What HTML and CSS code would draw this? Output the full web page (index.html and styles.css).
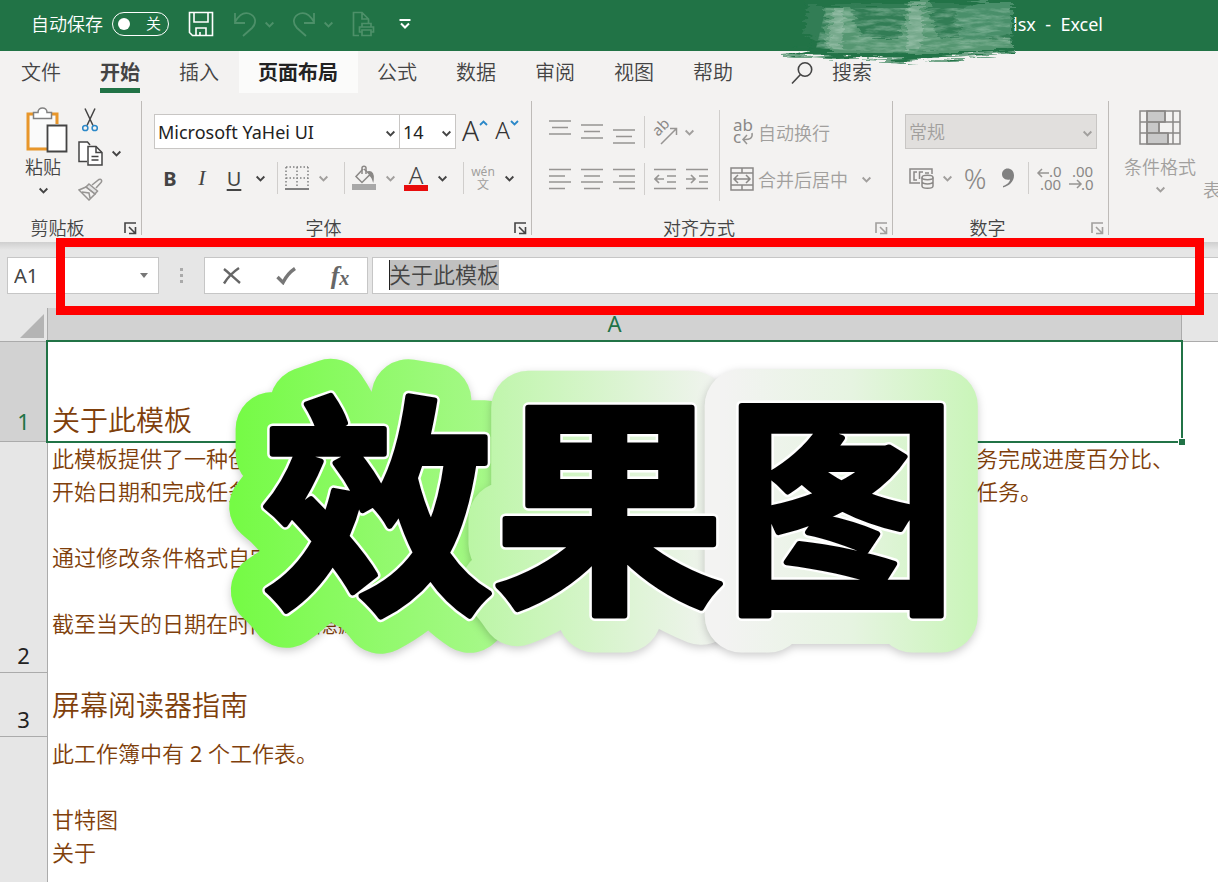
FILE: index.html
```html
<!DOCTYPE html>
<html lang="zh-CN">
<head>
    <meta charset="UTF-8">
    <meta name="viewport" content="width=device-width, initial-scale=1.0">
    <title>Excel</title>
    <link rel="stylesheet" href="styles.css">
</head>
<body>
<!-- Shared icons -->
<svg class="sprite" aria-hidden="true">
    <symbol id="chevron" viewBox="0 0 10 10"><path d="M1.5 3.2L5 6.7L8.5 3.2" fill="none" stroke="currentColor" stroke-width="1.7"/></symbol>
    <symbol id="launcher" viewBox="0 0 13 13"><path d="M1 11V1H12M5 5L11 11M11.5 5V11.5H5" fill="none" stroke="currentColor" stroke-width="1.6"/></symbol>
</svg>

<header class="title-bar">
    <label class="autosave" for="autosave">自动保存</label>
    <span class="switch">
        <input type="checkbox" id="autosave">
        <span class="switch-text">关</span>
    </span>
    <button class="quick save" aria-label="保存">
        <svg width="26" height="26" viewBox="0 0 26 26" fill="none" stroke="#fff" stroke-width="1.6"><path d="M1.5 1.5H24.500V24.500H4.500L1.500 21.500ZM6 1.500V11H20V1.500M8 24.500V17H18V24.500M12 21V24.500"/></svg>
    </button>
    <button class="quick dim" aria-label="撤消">
        <svg width="24" height="26" viewBox="0 0 24 26" fill="none" stroke="currentColor" stroke-width="1.8"><path d="M2 2V12H12M2 11C6 4 11 1 16 2.500C23 5 24 12 19 17L10 25"/></svg>
    </button>
    <button class="quick-more dim" aria-label="撤消列表"><svg width="11" height="11"><use href="#chevron"/></svg></button>
    <button class="quick dim" aria-label="恢复">
        <svg width="24" height="26" viewBox="0 0 24 26" fill="none" stroke="currentColor" stroke-width="1.8"><path d="M22 2V12H12M22 11C18 4 13 1 8 2.500C1 5 0 12 5 17L14 25"/></svg>
    </button>
    <button class="quick-more dim" aria-label="恢复列表"><svg width="11" height="11"><use href="#chevron"/></svg></button>
    <button class="quick print dim" aria-label="打印预览">
        <svg width="23" height="26" viewBox="0 0 23 26" fill="none" stroke="currentColor" stroke-width="1.7"><path d="M7 24.500H1.500V1.500H10L16.500 8V12M10 1.500V8H16.500M10 16V12.500H19V16M10 21H7.500V16H21.500V21H19M10 19H19V24.500H10Z"/></svg>
    </button>
    <button class="quick" aria-label="自定义快速访问工具栏">
        <svg width="12" height="12" viewBox="0 0 12 12" fill="none" stroke="#fff" stroke-width="2"><path d="M0.500 2H11.500M2 5.500L6 9.500L10 5.500"/></svg>
    </button>
    <span class="doc-title">lsx&nbsp; -&nbsp; Excel</span>
    <svg class="smudge" width="250" height="66" viewBox="0 0 250 66" aria-hidden="true">
        <defs>
            <filter id="rough" x="-5%" y="-10%" width="110%" height="120%">
                <feTurbulence type="fractalNoise" baseFrequency="0.03 0.35" numOctaves="3" seed="4" result="n"/>
                <feDisplacementMap in="SourceGraphic" in2="n" scale="14" xChannelSelector="R" yChannelSelector="G"/>
            </filter>
            <filter id="grain" x="0" y="0" width="100%" height="100%">
                <feTurbulence type="fractalNoise" baseFrequency="0.05 0.25" numOctaves="4" seed="9"/>
                <feColorMatrix values="0 0 0 0 .62  0 0 0 0 .78  0 0 0 0 .68  2.400 0 0 0 -.9"/>
                <feComposite in2="SourceGraphic" operator="in"/>
            </filter>
        </defs>
        <g filter="url(#rough)">
            <path d="M28 0H238V52L190 56L150 58L124 62L100 57L60 58L12 54L36 48Z" fill="#217346"/>
            <path d="M32 4H236V42L150 50L60 52L28 34Z" fill="#317d54"/>
            <path d="M48 6H76L86 38L124 38L132 2H152L162 38L236 40V48L140 54L52 52Z" fill="#559671"/>
            <path d="M178 10L204 2H236V34L184 42Z" fill="#4a8f6a"/>
            <path d="M56 6H68L66 48H54ZM134 4H148L146 50H130Z" fill="#76a98c"/>
            <path d="M6 54L60 58M90 59L130 61L238 52" fill="none" stroke="#6fa487" stroke-width="2"/>
        </g>
        <path d="M50 8H234V46L120 54L40 48Z" fill="#fff" filter="url(#grain)" opacity="0.35"/>
    </svg>
</header>

<nav class="tabs">
    <a href="#">文件</a>
    <a href="#" class="active">开始</a>
    <a href="#">插入</a>
    <a href="#" class="hovered">页面布局</a>
    <a href="#">公式</a>
    <a href="#">数据</a>
    <a href="#">审阅</a>
    <a href="#">视图</a>
    <a href="#">帮助</a>
    <button class="search">
        <svg width="22" height="24" viewBox="0 0 22 24" fill="none" stroke="#444" stroke-width="1.6"><circle cx="14" cy="8.500" r="6.700"/><path d="M9.500 13.500L1 22.500"/></svg>
        搜索
    </button>
</nav>

<section class="ribbon">
    <div class="group clipboard">
        <div class="group-body">
            <button class="big-button paste">
                <svg class="paste-icon" width="42" height="46" viewBox="0 0 42 46" fill="none" stroke-width="2">
                    <path d="M9 7H2V42H21" stroke="#e8962a" stroke-width="3"/>
                    <path d="M24 7H31V17" stroke="#e8962a" stroke-width="3"/>
                    <path d="M4 9H29V17H20V40H4Z" fill="#fafafa"/>
                    <path d="M7.500 11.500V5.500H12C12 -0.500 21 -0.500 21 5.500H25.500V11.500Z" fill="#fff" stroke="#808080" stroke-width="1.500"/>
                    <path d="M21.500 18.500H40.500V44.500H21.500Z" fill="#fff" stroke="#444" stroke-width="1.800"/>
                </svg>
                <span>粘贴</span>
                <svg width="11" height="11"><use href="#chevron"/></svg>
            </button>
            <div class="clip-tools">
                <div class="clip-row">
                    <button class="tool" aria-label="剪切">
                        <svg width="16" height="24" viewBox="0 0 16 24" fill="none" stroke-width="1.500"><path d="M3 0.500L11 17.500M13 0.500L5 17.500" stroke="#444"/><circle cx="3.300" cy="20" r="2.600" stroke="#2b88c8"/><circle cx="12.700" cy="20" r="2.600" stroke="#2b88c8"/></svg>
                    </button>
                </div>
                <div class="clip-row">
                    <button class="tool" aria-label="复制">
                        <svg width="25" height="25" viewBox="0 0 25 25" fill="#fff" stroke="#444" stroke-width="1.500"><path d="M9 20.500H1V1H9.500L12 4"/><path d="M10 5.500H18L24 11.500V24H10Z"/><path d="M18 5.500V11.500H24M13.500 15.500H20.500M13.500 19H20.500" fill="none"/></svg>
                    </button>
                    <button class="more" aria-label="复制选项"><svg width="11" height="11"><use href="#chevron"/></svg></button>
                </div>
                <div class="clip-row">
                    <button class="tool" aria-label="格式刷">
                        <svg width="25" height="23" viewBox="0 0 25 23" fill="none" stroke="#979593" stroke-width="1.500"><path d="M14 7L21 1.500C23 0.500 24.500 2.500 23 4.500L18 10"/><path d="M11 6L19.500 13L17 16L8 9Z" fill="#e4e4e4"/><path d="M8 9L1 12L11 22L17 16ZM4 14L11 15L12 20"/></svg>
                    </button>
                </div>
            </div>
        </div>
        <div class="group-name">剪贴板<button class="launcher" aria-label="剪贴板设置"><svg width="13" height="13"><use href="#launcher"/></svg></button></div>
    </div>

    <div class="group font">
        <div class="row">
            <span class="combo font-family">
                <select aria-label="字体"><option>Microsoft YaHei UI</option></select>
                <svg width="11" height="11"><use href="#chevron"/></svg>
            </span>
            <span class="combo font-size">
                <select aria-label="字号"><option>14</option></select>
                <svg width="11" height="11"><use href="#chevron"/></svg>
            </span>
            <button class="tool grow" aria-label="增大字号">A<svg width="9" height="6" viewBox="0 0 9 6" fill="none" stroke="#2b88c8" stroke-width="1.800"><path d="M1 5L4.500 1.500L8 5"/></svg></button>
            <button class="tool shrink" aria-label="减小字号">A<svg width="9" height="6" viewBox="0 0 9 6" fill="none" stroke="#2b88c8" stroke-width="1.800"><path d="M1 1L4.500 4.500L8 1"/></svg></button>
        </div>
        <div class="row">
            <button class="tool bold">B</button>
            <button class="tool italic">I</button>
            <button class="tool underline">U</button>
            <button class="more" aria-label="下划线选项"><svg width="11" height="11"><use href="#chevron"/></svg></button>
            <span class="divider"></span>
            <button class="tool narrow dim" aria-label="边框">
                <svg width="24" height="24" viewBox="0 0 24 24" fill="none" stroke="#808080" stroke-width="1.500"><path d="M1 1H23M1 12H23M1 1V22M12 1V22M23 1V22" stroke-dasharray="1.500 2"/><path d="M0 23H24" stroke-width="2"/></svg>
            </button>
            <button class="more wide dim" aria-label="边框选项"><svg width="11" height="11"><use href="#chevron"/></svg></button>
            <span class="divider"></span>
            <button class="tool narrow dim" aria-label="填充颜色">
                <svg width="24" height="26" viewBox="0 0 24 26" fill="none" stroke="#8a8886" stroke-width="1.500"><path d="M11 4L4 11.500L10 17.500L18 9.500L12 4"/><path d="M10 9V3C10 0.500 14 0.500 14 3V9"/><path d="M16 7C20 6 22 10 21 15C20 12 19 10.500 17 10" fill="#8a8886"/><path d="M0 19H24V25H0Z" fill="#a8a8a8" stroke="none"/></svg>
            </button>
            <button class="more wide dim" aria-label="填充选项"><svg width="11" height="11"><use href="#chevron"/></svg></button>
            <button class="tool narrow font-color">A</button>
            <button class="more wide" aria-label="字体颜色选项"><svg width="11" height="11"><use href="#chevron"/></svg></button>
            <span class="divider"></span>
            <button class="tool narrow pinyin"><span>wén</span><span>文</span></button>
            <button class="more wide" aria-label="拼音选项"><svg width="11" height="11"><use href="#chevron"/></svg></button>
        </div>
        <div class="group-name">字体<button class="launcher" aria-label="字体设置"><svg width="13" height="13"><use href="#launcher"/></svg></button></div>
    </div>

    <div class="group align">
        <div class="group-body">
            <div class="align-tools">
                <div class="row">
                    <button class="tool" aria-label="顶端对齐"><svg class="lines" width="22" height="24" viewBox="0 0 22 24"><path d="M0 1H22M3 7.500H19M0 14H22"/></svg></button>
                    <button class="tool" aria-label="垂直居中"><svg class="lines" width="22" height="24" viewBox="0 0 22 24"><path d="M0 5H22M3 11.500H19M0 18H22"/></svg></button>
                    <button class="tool" aria-label="底端对齐"><svg class="lines" width="22" height="24" viewBox="0 0 22 24"><path d="M0 10H22M3 16.500H19M0 23H22"/></svg></button>
                    <span class="divider slim"></span>
                    <button class="tool dim" aria-label="方向">
                        <svg class="with-text" width="26" height="26" viewBox="0 0 26 26" fill="none" stroke="#979593" stroke-width="1.500"><text class="icon-text" x="0" y="0" transform="translate(6 18) rotate(-45)">ab</text><path d="M9 25L24 10M18 9.500H24.500V16"/></svg>
                    </button>
                    <button class="more tight dim" aria-label="方向选项"><svg width="11" height="11"><use href="#chevron"/></svg></button>
                </div>
                <div class="row">
                    <button class="tool" aria-label="左对齐"><svg class="lines" width="22" height="22" viewBox="0 0 22 22"><path d="M0 1.500H22M0 8H16M0 14H22M0 20.500H16"/></svg></button>
                    <button class="tool" aria-label="居中"><svg class="lines" width="22" height="22" viewBox="0 0 22 22"><path d="M0 1.500H22M3 8H19M0 14H22M3 20.500H19"/></svg></button>
                    <button class="tool" aria-label="右对齐"><svg class="lines" width="22" height="22" viewBox="0 0 22 22"><path d="M0 1.500H22M6 8H22M0 14H22M6 20.500H22"/></svg></button>
                    <span class="divider slim"></span>
                    <button class="tool" aria-label="减少缩进量"><svg class="lines" width="22" height="22" viewBox="0 0 22 22"><path d="M0 1.500H22M13 8H22M13 14H22M0 20.500H22M1 11H10M5 7L1 11L5 15"/></svg></button>
                    <button class="tool" aria-label="增加缩进量"><svg class="lines" width="22" height="22" viewBox="0 0 22 22"><path d="M0 1.500H22M13 8H22M13 14H22M0 20.500H22M0 11H9M5 7L9 11L5 15"/></svg></button>
                </div>
            </div>
            <div class="wrap-tools dim">
                <button class="text-tool">
                    <svg class="with-text" width="24" height="26" viewBox="0 0 24 26" fill="none" stroke="#979593" stroke-width="1.500"><text class="icon-text large" x="3" y="12">ab</text><text class="icon-text large" x="3" y="24">c</text><path d="M22 14C23 19 20 21 13 20.500M17 16L13 20.500L17 25"/></svg>
                    自动换行
                </button>
                <button class="text-tool">
                    <svg width="24" height="24" viewBox="0 0 24 24" fill="none" stroke="#8a8886" stroke-width="1.500"><path d="M1 1H23V23H1ZM1 6H23M1 18H23M12 1V6M12 18V23M4 12H20M8 8L4 12L8 16M16 8L20 12L16 16"/></svg>
                    合并后居中
                    <svg class="merge-more" width="11" height="11"><use href="#chevron"/></svg>
                </button>
            </div>
        </div>
        <div class="group-name">对齐方式<button class="launcher dim" aria-label="对齐设置"><svg width="13" height="13"><use href="#launcher"/></svg></button></div>
    </div>

    <div class="group number">
        <div class="row">
            <span class="combo format dim">
                <select aria-label="数字格式" disabled><option>常规</option></select>
                <svg width="11" height="11"><use href="#chevron"/></svg>
            </span>
        </div>
        <div class="row dim">
            <button class="tool" aria-label="会计数字格式">
                <svg width="25" height="22" viewBox="0 0 25 22" fill="none" stroke="#8a8886" stroke-width="1.500"><path d="M11 16H1V2H23V7M8 5H5V13H8M14 5H10.500V12"/><path d="M16 6H20" /><ellipse cx="18.500" cy="10.500" rx="5.500" ry="2.200"/><path d="M13 10.500V19C13 22 24 22 24 19V10.500M13 15C14 17.500 23 17.500 24 15"/></svg>
            </button>
            <button class="more" aria-label="会计选项"><svg width="11" height="11"><use href="#chevron"/></svg></button>
            <button class="tool percent">%</button>
            <button class="tool comma" aria-label="千位分隔样式">
                <svg width="14" height="20" viewBox="0 0 14 20"><path d="M6.500 0.500C10 0.500 13 3 13 7.500C13 13.500 8 18 2 19.500V18C6 16.500 9 14 9 11.500C3 12.500 1 9 1 6C1 3 3.500 0.500 6.500 0.500Z" fill="#808080"/></svg>
            </button>
            <span class="divider mid"></span>
            <button class="tool" aria-label="增加小数位数">
                <svg class="with-text" width="26" height="26" viewBox="0 0 26 26" fill="none" stroke="#979593" stroke-width="1.500"><text class="icon-text" x="12" y="12">.0</text><text class="icon-text" x="3" y="25">.00</text><path d="M12 8H1M5 4L1 8L5 12"/></svg>
            </button>
            <button class="tool" aria-label="减少小数位数">
                <svg class="with-text" width="26" height="26" viewBox="0 0 26 26" fill="none" stroke="#979593" stroke-width="1.500"><text class="icon-text" x="3" y="12">.00</text><text class="icon-text" x="12" y="25">.0</text><path d="M0 19H12M8 15L12 19L8 23"/></svg>
            </button>
        </div>
        <div class="group-name">数字<button class="launcher dim" aria-label="数字设置"><svg width="13" height="13"><use href="#launcher"/></svg></button></div>
    </div>

    <div class="group styles dim">
        <button class="big-button">
            <svg width="42" height="35" viewBox="0 0 42 35" fill="none" stroke="#8a8886" stroke-width="1.500">
                <path d="M8 1H26V12H8ZM8 12H20V23H8ZM8 23H29V34H8Z" fill="#c8c8c8"/>
                <path d="M1 1H41V34H1ZM1 12H41M1 23H41M8 1V34M34 1V34M26 1V12M20 12V23M29 23V34"/>
            </svg>
            <span>条件格式</span>
            <svg width="11" height="11"><use href="#chevron"/></svg>
        </button>
        <button class="table-format">表格格式</button>
    </div>
</section>

<section class="formula-bar">
    <div class="name-box">
        <input type="text" value="A1" aria-label="名称框">
        <svg width="8" height="5" viewBox="0 0 8 5"><path d="M0 0H8L4 5Z" fill="#777"/></svg>
    </div>
    <span class="grip"><i></i><i></i><i></i></span>
    <div class="formula-buttons">
        <button aria-label="取消"><svg width="20" height="18" viewBox="0 0 20 18"><path d="M2 2C7 6 12 11 18 16M17 1C11 5 6 10 2 16.500" fill="none" stroke="#666" stroke-width="2.400"/></svg></button>
        <button aria-label="输入"><svg width="20" height="18" viewBox="0 0 20 18"><path d="M1.500 10L7 15.500C10 9.500 13 5.500 19 1.500" fill="none" stroke="#777" stroke-width="3.400"/></svg></button>
        <button class="fx" aria-label="插入函数"><i>f</i><i class="x">x</i></button>
    </div>
    <input class="formula" type="text" value="关于此模板" aria-label="编辑栏">
    <div class="highlight-frame"></div>
</section>

<main class="sheet">
    <table>
        <thead>
        <tr>
            <th class="corner"><svg width="24" height="24" viewBox="0 0 24 24"><path d="M24 0V24H0Z" fill="#b4b4b4"/></svg></th>
            <th class="col-head">A</th>
            <th class="col-rest"></th>
        </tr>
        </thead>
        <tbody>
        <tr class="row-1">
            <th class="selected">1</th>
            <td class="title active-cell">关于此模板<span class="cell-outline"></span></td>
            <td></td>
        </tr>
        <tr class="row-2">
            <th>2</th>
            <td>
                <p>此模板提供了一种创建甘特图的简单方法，可帮助你直观呈现和跟踪项目。只需输入任务名、任务完成进度百分比、</p>
                <p>开始日期和完成任务所需的天数，甘特图便会自动更新。你还可以插入新行，添加更多项目和新任务。</p>
                <p>&nbsp;</p>
                <p>通过修改条件格式自定义甘特图条形的颜色。</p>
                <p>&nbsp;</p>
                <p>截至当天的日期在时间线上隐藏。</p>
            </td>
            <td></td>
        </tr>
        <tr class="row-3">
            <th>3</th>
            <td class="title">屏幕阅读器指南</td>
            <td></td>
        </tr>
        <tr class="row-4">
            <th></th>
            <td>
                <p>此工作簿中有 <span class="digit">2</span> 个工作表。</p>
                <p>&nbsp;</p>
                <p>甘特图</p>
                <p>关于</p>
            </td>
            <td></td>
        </tr>
        </tbody>
    </table>

    <!-- Sticker over the sheet -->
    <svg class="sticker" width="780" height="330" viewBox="220 340 780 330">
        <defs>
            <linearGradient id="g1" gradientUnits="userSpaceOnUse" x1="235" y1="0" x2="510" y2="0"><stop offset="0" stop-color="#75fb45"/><stop offset="1" stop-color="#aaf88e"/></linearGradient>
            <linearGradient id="g2" gradientUnits="userSpaceOnUse" x1="470" y1="0" x2="725" y2="0"><stop offset="0" stop-color="#bbf6a5"/><stop offset="1" stop-color="#f2f3f1"/></linearGradient>
            <linearGradient id="g3" gradientUnits="userSpaceOnUse" x1="725" y1="0" x2="980" y2="0"><stop offset="0" stop-color="#f3f3f2"/><stop offset="0.500" stop-color="#e6f4e1"/><stop offset="1" stop-color="#c9f5b8"/></linearGradient>
        </defs>
        <g class="sticker-back">
            <text x="379" y="594" fill="url(#g1)" stroke="url(#g1)">效</text>
            <text x="610" y="594" fill="url(#g2)" stroke="url(#g2)">果</text>
            <text x="842" y="594" fill="url(#g3)" stroke="url(#g3)">图</text>
        </g>
        <g class="sticker-edge">
            <text x="379" y="594">效</text>
            <text x="610" y="594">果</text>
            <text x="842" y="594">图</text>
        </g>
        <g class="sticker-face">
            <text x="379" y="594">效</text>
            <text x="610" y="594">果</text>
            <text x="842" y="594">图</text>
        </g>
    </svg>
</main>
</body>
</html>
```
FILE: styles.css
```css
* {
    box-sizing: border-box;
}

body {
    margin: 0;
    height: 100vh;
    overflow: hidden;
    display: flex;
    flex-direction: column;
    font-family: "Noto Sans", "Noto Sans CJK SC", sans-serif;
    font-size: 18px;
    font-weight: 350;
    color: #444;
    background-color: #fff;
}

button, input, select {
    font: inherit;
    color: inherit;
    border: none;
    background: none;
    padding: 0;
    margin: 0;
}

button {
    display: flex;
    align-items: center;
    justify-content: center;
    flex: none;
    white-space: nowrap;
}

svg {
    flex: none;
}

.sprite {
    position: absolute;
    width: 0;
    height: 0;
}

.with-text {
    overflow: visible;
}

.dim {
    color: #a19f9d;
}

/* Title bar */
.title-bar {
    position: relative;
    z-index: 1;
    display: flex;
    align-items: center;
    flex: none;
    height: 51px;
    padding: 0 0 3px 31px;
    color: #fff;
    background-color: #217346;
}

.autosave {
    line-height: 24px;
}

.switch {
    position: relative;
    width: 57px;
    height: 24px;
    margin: 0 18px 0 9px;
}

.switch input {
    appearance: none;
    display: block;
    width: 57px;
    height: 24px;
    border: 1px solid #fff;
    border-radius: 12px;
}

.switch input::before {
    content: "";
    display: block;
    width: 12px;
    height: 12px;
    margin: 5px;
    border-radius: 50%;
    background-color: #fff;
}

.switch-text {
    position: absolute;
    right: 8px;
    top: 0;
    font-size: 15px;
    line-height: 23px;
    pointer-events: none;
}

.quick {
    width: 28px;
    height: 28px;
}

.quick.save {
    margin-right: 16px;
}

.quick-more {
    width: 20px;
    height: 28px;
    margin-right: 11px;
}

.quick.print {
    margin-right: 14px;
}

.title-bar .dim {
    color: #4d9069;
}

.doc-title {
    margin-left: auto;
    margin-right: 115px;
    font-weight: 400;
    line-height: 24px;
}

.smudge {
    position: absolute;
    top: 0;
    right: 192px;
}

/* Tabs */
.tabs {
    display: flex;
    flex: none;
    height: 48px;
    padding-left: 2px;
    font-size: 20px;
    line-height: 44px;
    background-color: #f3f2f1;
}

.tabs a {
    position: relative;
    height: 42px;
    padding: 0 20px 0 19px;
    color: #444;
    text-decoration: none;
}

.tabs .active, .tabs .hovered {
    font-weight: bold;
}

.tabs .active::after {
    content: "";
    position: absolute;
    left: 19px;
    right: 20px;
    bottom: 0;
    height: 5px;
    background-color: #217346;
}

.tabs .hovered {
    color: #222;
    background-color: #fbfbfa;
}

.search {
    height: 43px;
    margin-left: 38px;
    gap: 19px;
}

/* Ribbon */
.ribbon {
    display: flex;
    flex: none;
    height: 143px;
    padding: 2px 0 7px;
    overflow: hidden;
    background-color: #f3f2f1;
}

.group {
    display: flex;
    flex-direction: column;
    flex: none;
    gap: 11px;
    padding: 13px 0 0 12px;
    border-right: 1px solid #bebbb8;
}

.group-body {
    display: flex;
}

.group-name {
    position: relative;
    margin: auto 0 -2px -12px;
    padding-right: 26px;
    line-height: 18px;
    text-align: center;
    color: #444;
}

.launcher {
    position: absolute;
    right: 4px;
    bottom: 2px;
}

.row {
    display: flex;
    align-items: center;
    height: 36px;
}

.tool {
    width: 32px;
    height: 32px;
}

.tool.narrow {
    width: 24px;
}

.more {
    width: 20px;
    height: 32px;
}

.more.wide {
    width: 28px;
}

.more.tight {
    width: 16px;
}

.divider {
    width: 1px;
    height: 32px;
    margin: 0 7px;
    background-color: #d0cecc;
}

.divider.slim {
    margin: 0 4px;
}

.divider.mid {
    margin: 0 5px;
}

.clipboard {
    width: 142px;
    padding-top: 5px;
}

.big-button {
    flex-direction: column;
}

.big-button span {
    line-height: 28px;
}

.paste {
    align-self: flex-start;
    width: 62px;
    margin-top: 1px;
}

.paste-icon {
    margin-left: 7px;
}

.paste svg:last-child {
    margin-top: 4px;
}

.clip-tools {
    display: flex;
    flex-direction: column;
    gap: 5px;
    width: 54px;
}

.clip-row {
    display: flex;
    align-items: center;
    height: 31px;
}

.clip-row:first-child {
    height: 27px;
}

.font {
    width: 390px;
}

.font .row:first-child, .number .row:first-child {
    height: 35px;
}

.combo {
    position: relative;
    height: 35px;
    border: 1px solid #c8c6c4;
    background-color: #fff;
}

.combo select {
    appearance: none;
    width: 100%;
    height: 33px;
    padding-left: 3px;
    font-weight: 400;
    color: #222;
}

.combo svg {
    position: absolute;
    right: 3px;
    top: 13px;
    pointer-events: none;
}

.font-family {
    width: 246px;
}

.font-size {
    width: 57px;
    margin-left: -1px;
}

.grow, .shrink {
    align-items: flex-start;
    color: #333;
    line-height: 28px;
}

.grow {
    margin-left: 3px;
    font-size: 28px;
}

.shrink {
    font-size: 24px;
}

.grow svg, .shrink svg {
    margin-top: 4px;
}

.bold {
    font-size: 20px;
    font-weight: bold;
}

.italic {
    font-family: "Liberation Serif", serif;
    font-size: 22px;
    font-style: italic;
}

.underline {
    font-size: 20px;
    font-weight: 400;
    text-decoration: underline;
    text-underline-offset: 3px;
}

.font-color {
    height: 26px;
    border-bottom: 6px solid #e80c0c;
    font-size: 24px;
    line-height: 20px;
}

.pinyin {
    flex-direction: column;
    color: #a19f9d;
    font-size: 12px;
    font-weight: 400;
    line-height: 13px;
}

.align {
    width: 361px;
    padding-top: 9px;
}

.align-tools {
    display: flex;
    flex-direction: column;
    gap: 11px;
    width: 176px;
    padding-top: 4px;
    border-right: 1px solid #d0cecc;
}

.wrap-tools {
    display: flex;
    flex-direction: column;
    align-items: flex-start;
    gap: 11px;
    padding: 4px 0 4px 10px;
}

.text-tool {
    gap: 4px;
    height: 36px;
}

.merge-more {
    margin-left: 9px;
}

.lines {
    fill: none;
    stroke: #979593;
    stroke-width: 1.7px;
}

.icon-text {
    fill: #8a8886;
    stroke: none;
    font-size: 15px;
    font-weight: 400;
}

.icon-text.large {
    font-size: 17px;
}

.number {
    width: 216px;
}

.format {
    width: 192px;
    background-color: #e1dfdd;
}

.format select {
    font-weight: 350;
    color: #a19f9d;
    opacity: 1;
}

.percent {
    width: 36px;
    font-size: 28px;
    color: #8a8886;
}

.comma {
    width: 30px;
}

.styles {
    flex: 1;
    flex-direction: row;
    align-items: flex-start;
    gap: 7px;
    min-width: 0;
    padding: 9px 0 0 15px;
    overflow: hidden;
    border-right: none;
}

.styles .big-button span {
    margin-top: 8px;
}

.styles .big-button svg:last-child {
    margin-top: 3px;
}

.table-format {
    margin-top: 68px;
    line-height: 24px;
}

/* Formula bar */
.formula-bar {
    position: relative;
    z-index: 2;
    display: flex;
    flex: none;
    height: 66px;
    padding: 15px 0 14px 7px;
    background: linear-gradient(#cfcfcf, #e6e6e6 8px);
}

.name-box {
    display: flex;
    align-items: center;
    width: 152px;
    padding: 0 10px 0 6px;
    border: 1px solid #c6c6c6;
    font-size: 20px;
    font-weight: 400;
    background-color: #fff;
}

.name-box input {
    flex: 1;
    min-width: 0;
}

.grip {
    display: flex;
    flex-direction: column;
    align-items: center;
    justify-content: center;
    gap: 3px;
    width: 45px;
}

.grip i {
    width: 3px;
    height: 3px;
    background-color: #aaa;
}

.formula-buttons {
    display: flex;
    width: 164px;
    border: 1px solid #c6c6c6;
    background-color: #fff;
}

.formula-buttons button {
    flex: 1;
}

.fx {
    font-family: "Liberation Serif", serif;
    font-size: 26px;
    font-weight: bold;
    line-height: 28px;
    color: #666;
}

.fx .x {
    font-size: 20px;
    padding-top: 4px;
}

.formula {
    flex: 1;
    min-width: 0;
    margin-left: 4px;
    padding: 0 0 3px 16px;
    border: 1px solid #c6c6c6;
    border-right: none;
    font-size: 22px;
    line-height: 30px;
    /* caret and selected text */
    background: linear-gradient(#222, #222) 16px 2px / 1px 30px no-repeat, linear-gradient(#c0c0c0, #c0c0c0) 16px 2px / 110px 30px no-repeat, #fff;
}

.highlight-frame {
    position: absolute;
    top: -4px;
    left: 56px;
    right: 14px;
    bottom: -7px;
    border: 9px solid #f00;
    pointer-events: none;
}

/* Sheet */
.sheet {
    position: relative;
    flex: 1;
    min-height: 0;
}

table {
    width: 100%;
    table-layout: fixed;
    border-collapse: separate;
    border-spacing: 0;
}

th {
    padding: 0;
    font-size: 22px;
    font-weight: 400;
    line-height: 33px;
    color: #222;
    background-color: #e6e6e6;
    border-right: 1px solid #ababab;
    border-bottom: 1px solid #ababab;
}

tbody th {
    vertical-align: bottom;
}

th.corner {
    width: 48px;
    height: 34px;
    padding: 0 3px 3px 0;
    line-height: 0;
    text-align: right;
    vertical-align: bottom;
}

th.col-head {
    color: #217346;
    background-color: #d2d2d2;
    line-height: 30px;
    vertical-align: top;
}

th.col-rest {
    width: 36px;
    border-right: none;
}

th.selected {
    color: #217346;
    background-color: #d2d2d2;
    line-height: 40px;
}

td {
    padding: 0 0 0 4px;
    font-size: 22px;
    line-height: 33px;
    color: #7f3f0b;
    vertical-align: top;
    white-space: nowrap;
}

td p {
    margin: 0;
}

td.title {
    font-size: 28px;
    line-height: 44px;
    vertical-align: middle;
}

td.active-cell {
    position: relative;
    vertical-align: bottom;
}

.digit {
    font-weight: 400;
}

.cell-outline {
    position: absolute;
    top: -2px;
    left: -2px;
    right: -1px;
    bottom: -1px;
    border: 2px solid #217346;
}

.cell-outline::after {
    content: "";
    position: absolute;
    right: -4px;
    bottom: -4px;
    width: 6px;
    height: 6px;
    border-top: 1px solid #fff;
    border-left: 1px solid #fff;
    background-color: #217346;
}

.row-1 {
    height: 100px;
}

.row-2 {
    height: 231px;
}

.row-3 {
    height: 64px;
}

.row-4 {
    height: 160px;
}

.sticker {
    position: absolute;
    top: 32px;
    left: 18%;
    overflow: visible;
    pointer-events: none;
    font-family: "Noto Sans CJK SC", sans-serif;
    font-size: 232px;
    font-weight: 700;
    text-anchor: middle;
    stroke-linejoin: round;
}

.sticker-back text {
    stroke-width: 74px;
    filter: drop-shadow(0 3px 4px rgba(0, 0, 0, 0.2));
}

.sticker-edge {
    fill: #fff;
    stroke: #fff;
    stroke-width: 11px;
}

.sticker-face {
    fill: #000;
    stroke: #000;
    stroke-width: 6px;
}
```
